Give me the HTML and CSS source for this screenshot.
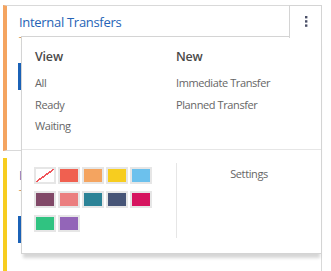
FILE: index.html
```html
<!DOCTYPE html>
<html lang="en">
<head>
    <meta charset="UTF-8">
    <meta name="viewport" content="width=device-width, initial-scale=1.0">
    <title>Inventory Overview</title>
    <link rel="stylesheet" href="styles.css">
</head>
<body>
    <div class="column">
        <div class="card card-open color-orange">
            <div class="card-title">Internal Transfers</div>
            <div class="card-sub">T</div>
            <button class="btn-primary"></button>

            <a class="manage-toggle" href="#">
                <svg width="4" height="11" viewBox="0 0 4 11">
                    <rect x="1" y="0" width="2.4" height="2.4"/>
                    <rect x="1" y="4.2" width="2.4" height="2.4"/>
                    <rect x="1" y="8.4" width="2.4" height="2.4"/>
                </svg>
            </a>

            <div class="manage-pane">
                <div class="pane-top">
                    <div class="pane-col">
                        <h4>View</h4>
                        <ul>
                            <li>All</li>
                            <li>Ready</li>
                            <li>Waiting</li>
                        </ul>
                    </div>
                    <div class="pane-col">
                        <h4>New</h4>
                        <ul>
                            <li>Immediate Transfer</li>
                            <li>Planned Transfer</li>
                        </ul>
                    </div>
                </div>
                <div class="pane-bottom">
                    <div class="colors">
                        <span class="swatch no-color"></span>
                        <span class="swatch" style="background:#f06050"></span>
                        <span class="swatch" style="background:#f4a460"></span>
                        <span class="swatch" style="background:#f7cd1f"></span>
                        <span class="swatch" style="background:#6cc1ed"></span>
                        <span class="swatch" style="background:#814968"></span>
                        <span class="swatch" style="background:#eb7e7f"></span>
                        <span class="swatch" style="background:#2c8397"></span>
                        <span class="swatch" style="background:#475577"></span>
                        <span class="swatch" style="background:#d6145f"></span>
                        <span class="swatch" style="background:#30c381"></span>
                        <span class="swatch" style="background:#9365b8"></span>
                    </div>
                    <div class="settings">Settings</div>
                </div>
            </div>
        </div>

        <div class="card color-yellow">
            <div class="card-title">I</div>
            <div class="card-sub">T</div>
            <button class="btn-primary"></button>
        </div>
    </div>
</body>
</html>
```

FILE: styles.css
```css
body {
    margin: 0;
    background: #fff;
    font-family: "Open Sans", "Noto Sans", sans-serif;
    color: #4c4c4c;
}

.column {
    width: 319px;
    padding: 5px 0 0 3px;
}

.card {
    position: relative;
    background: #fff;
    border-right: 1px solid #d9d9d9;
    padding: 8px 12px 0 12px;
    height: 137px;
}

.card-open {
    border-top: 1px solid #d9d9d9;
    border-bottom: 1px solid #d9d9d9;
    padding-top: 7px;
}

.card + .card {
    margin-top: 7px;
    height: 112px;
}

.color-orange {
    border-left: 4px solid #f4a460;
}

.color-yellow {
    border-left: 4px solid #f7cd1f;
}

.card-title {
    font-size: 13px;
    line-height: 18px;
    letter-spacing: -0.3px;
    color: #2563b6;
}

.card-sub {
    margin-top: 2px;
    font-size: 11px;
    line-height: 16px;
    color: #c98a4e;
}

.btn-primary {
    display: block;
    margin: 14px 0 0 -1px;
    height: 27px;
    width: 110px;
    border: none;
    background: #1b62b7;
}

/* kebab button, joined to the open menu */
.manage-toggle {
    position: absolute;
    top: -1px;
    right: -1px;
    z-index: 2;
    box-sizing: border-box;
    width: 33px;
    height: 33px;
    display: flex;
    justify-content: center;
    padding-top: 10px;
    background: #fff;
    border: 1px solid #d4d4d4;
    border-bottom: none;
}

.manage-toggle svg {
    fill: #4b5068;
}

.manage-pane {
    position: absolute;
    top: 30px;
    left: 14px;
    right: -1px;
    z-index: 1;
    background: #fff;
    border: 1px solid #d4d4d4;
    box-shadow: 0 6px 3px -2px rgba(0, 0, 0, 0.16);
}

.pane-top {
    display: grid;
    grid-template-columns: 141px 1fr;
    padding: 10px 0 12.5px 13px;
    border-bottom: 1px solid #e6e6e6;
}

.pane-col h4 {
    margin: 0 0 5px;
    font-size: 12.5px;
    font-weight: 600;
    line-height: 20px;
    letter-spacing: -0.2px;
    color: #4a4a4a;
}

.pane-col ul {
    list-style: none;
    margin: 0;
    padding: 0;
}

.pane-col li {
    font-size: 11px;
    line-height: 21.5px;
    letter-spacing: -0.4px;
    color: #666;
}

.pane-bottom {
    display: flex;
    padding: 13px 0 15px;
}

.colors {
    width: 142px;
    padding: 4px 0 6px 12px;
    display: grid;
    grid-template-columns: repeat(5, 22px);
    grid-auto-rows: 17px;
    gap: 7px 2px;
}

.swatch {
    box-sizing: border-box;
    border: 2px solid #e6e6e6;
    background-clip: padding-box;
}

.no-color {
    background: #fff linear-gradient(to bottom right,
        transparent calc(50% - 0.8px),
        #f0555a calc(50% - 0.8px),
        #f0555a calc(50% + 0.8px),
        transparent calc(50% + 0.8px));
    background-clip: padding-box;
}

.settings {
    flex: 1;
    border-left: 1px solid #e6e6e6;
    padding-top: 1px;
    text-align: center;
    font-size: 11px;
    line-height: 20px;
    letter-spacing: -0.4px;
    color: #666;
}
```
